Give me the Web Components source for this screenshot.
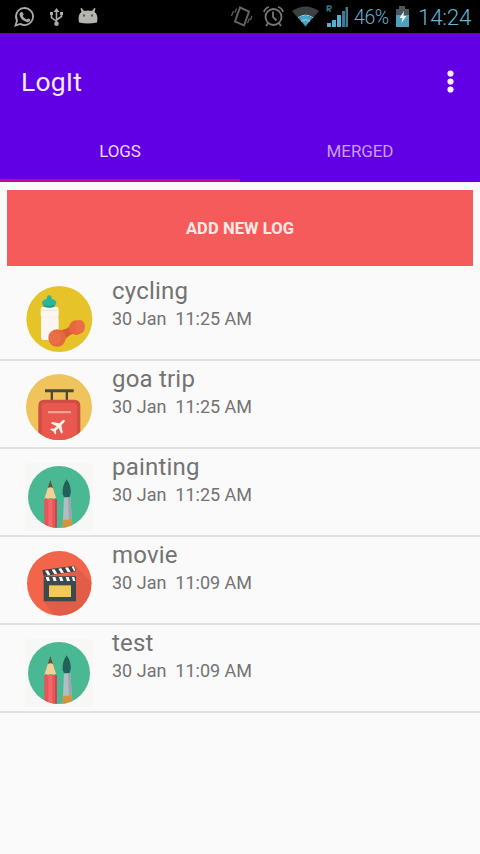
<!DOCTYPE html>
<html lang="en">
<head>
<meta charset="utf-8">
<title>LogIt</title>
<style>
body{margin:0;width:480px;height:854px;overflow:hidden;background:#fafafa;font-family:Roboto,"Liberation Sans",sans-serif}
</style>
</head>
<body>
<log-app></log-app>
<script>
const define = (name, html) => customElements.define(name, class extends HTMLElement {
  connectedCallback() {
    if (this.shadowRoot) return;
    const t = document.createElement('template');
    t.innerHTML = typeof html === 'function' ? html(this) : html;
    this.attachShadow({mode: 'open'}).append(t.content.cloneNode(true));
  }
});

const supplies = `
  <rect x="30" y="39" width="204" height="204" fill="#f7f7f6"/>
  <circle cx="132" cy="141" r="93" fill="#4bb894"/>
  <g clip-path="url(#c)">
    <path d="M88 146h36v100H88z" fill="#e9535a"/><path d="M100 146h12v100h-12z" fill="#f4686b"/><path d="M120 146h6v100h-6z" fill="#c74950"/>
    <path d="M106 90l18 57q-5-6-9 0q-8-6-16 0q-6-6-11 0z" fill="#f2d294"/>
    <path d="M106 89l8 25q-8-5-16 0z" fill="#4c5b4a"/>
    <path d="M155 88q15 22 12 43l-4 13h-15l-5-13q-2-23 12-43z" fill="#23605a"/>
    <path d="M147 142h19l5 68h-27z" fill="#b1bec1"/><path d="M159 142h7l5 68h-9z" fill="#98a7ab"/>
    <path d="M143 209h28l2 36h-31z" fill="#d39640"/>
  </g>`;
const art = {
  cycling: [3, 133, 132, 99, `<circle cx="133" cy="132" r="99" fill="#e6c329"/>
    <path d="M77 104q0-9 9-9h36q9 0 9 9v19q-3 5 0 10v52q0 10-9 10H87q-9 0-9-10v-52q3-5-1-10z" fill="#fbf6f0"/>
    <path d="M78 104h52v4H78zM79 125h51v2H79z" fill="#f0e8d4"/>
    <path d="M95 72q0-11 8-11t7 11q13 2 14 11-3 14-22 14-19-1-21-14 3-9 14-11z" fill="#29b69a"/><path d="M84 89q18 8 36 0l-3 7q-14 5-29 0z" fill="#179b89"/>
    <path d="M137 166q20-2 32-18l17 25q-23 3-35 20z" fill="#d95b36"/>
    <ellipse cx="184" cy="158" rx="22" ry="22" fill="#e7683f"/><ellipse cx="195" cy="155" rx="15" ry="20" fill="#ea6d45"/>
    <circle cx="126" cy="189" r="26" fill="#e7683f"/><circle cx="120" cy="190" r="18" fill="#ea6f47"/>`],
  trip: [3, 132, 132, 99, `<circle cx="132" cy="132" r="99" fill="#efc45c"/>
    <g clip-path="url(#c)"><path d="M90 79h86v9H90zM107 86h7v28h-7zM152 86h7v28h-7z" fill="#4b4936"/>
    <path d="M70 240V128q0-18 18-18h90q18 0 18 18v112z" fill="#cf4d43"/>
    <path d="M80 240V130q0-10 10-10h86q10 0 10 10v110z" fill="#e9584e"/>
    <path d="M99 144h69v7H99z" fill="#f9a492"/></g>
    <path transform="translate(132 188) rotate(45)" d="M0-24q4 0 4 7v11l18 12v6L4 6v11l7 6v4L0 24l-11 3v-4l7-6V6l-18 6V6l18-12v-11q0-7 4-7z" fill="#fff4ea"/>`],
  supplies: [2, 132, 141, 93, supplies],
  movie: [2, 133, 136, 97, `<circle cx="133" cy="136" r="97" fill="#f2654b"/>
    <path d="M181 85l48 47q1 59-53 91-30 17-62 6l-28-39z" fill="#e15d47" clip-path="url(#c)"/>
    <path d="M82 96l97-13 4 17-97 14z" fill="#3d4246"/>
    <path d="M86 115h97v75H86z" fill="#3d4a4d"/>
    <path d="M90 98l9-1 7 13-8 1zM110 95l9-1 8 13-9 1zM130 92l9-1 8 13-9 1zM150 89l9-1 8 13-9 1zM170 86l7-1 4 14-4 0zM92 117h9l4 12h-9zM112 117h9l4 12h-9zM132 117h9l4 12h-9zM152 117h9l4 12h-9zM171 117h7l3 12h-7z" fill="#fff"/>
    <path d="M102 142h66v35h-66z" fill="#f3ca5a"/>`]
};

define('log-icon', el => {
  const [dy, cx, cy, r, body] = art[el.getAttribute('kind')];
  return `<style>:host{display:block;width:90px;height:88px}svg{display:block}</style>
  <svg width="90" height="88" viewBox="0 ${-dy * 3} 270 264"><clipPath id="c"><circle cx="${cx}" cy="${cy}" r="${r}"/></clipPath>${body}</svg>`;
});

define('log-row', el => `<style>
  :host{display:flex;box-sizing:border-box;height:88px;padding-left:15px;gap:7px;border-bottom:2px solid #e1e1e1;color:#737373}
  log-icon{flex:none;margin-top:-1px}
  .name{font-size:24px;line-height:28px;margin-top:4px;letter-spacing:.2px}
  .date{font-size:18px;line-height:22px;margin-top:3px;white-space:pre}
  </style><log-icon kind="${el.getAttribute('kind')}"></log-icon>
  <div><div class="name"><slot></slot></div><div class="date"><slot name="date"></slot></div></div>`);

define('status-bar', `<style>
  :host{display:flex;height:33px;background:#000;align-items:center;color:#66b5d3}
  svg{flex:none;display:block}.pct{font-size:19.500px;width:40px;line-height:33px;letter-spacing:-.4px;padding-top:2px}.time{font-size:22.500px;line-height:33px;margin-left:4px;letter-spacing:-.3px;padding-top:2px}
  .pct,.time{font-weight:300}
  </style>
  <svg width="354" height="33" viewBox="0 0 354 33" fill="none" stroke="#aaa" stroke-width="1.8">
    <path d="M15.500 25.500l1.500-5a8.500 8.500 0 1 1 3.300 3.400z"/><path d="M20.500 12.500q1-1.500 2.200-.1l1 2-1 1.500q1.300 2.500 4 3.700l1.400-1.200 2.400 1.200q-.5 3-3.700 2.500-6.500-2-7.500-8z" fill="#aaa" stroke="none"/>
    <path d="M56.500 11v13M51.500 14.500v3l5 4M61.500 13.500v3l-5 3.500" stroke-width="1.600"/><path d="M53.500 12l3-4 3 4zM50 12h3v3h-3zM60 12h3v3h-3z" fill="#aaa" stroke="none"/><circle cx="56.500" cy="23.700" r="2.300" fill="#aaa" stroke="none"/>
    <path d="M79 22.500q-1.500-8 2.500-10.500l-1-3.500 1.200-.5 2.300 3q4-1 8 0l2.300-3 1.200.5-1 3.500q4 2.500 2.500 10.500-9.500 2-18 0z" fill="#b5b5b0" stroke="none"/><path d="M83 15.500h2M91 15.500h2" stroke="#555"/>
    <g stroke="#626262"><path d="M240 7.500l9 4-5 14-9-4z" stroke-width="2"/><path d="M236.500 8.500l-1.500 4M233.500 11l-2 5M247.500 23l2-4.500M250.500 20l1.500-4" stroke-width="1.200"/></g>
    <g stroke="#777"><circle cx="273.500" cy="17" r="8"/><path d="M273 11.500V17l3.500 3.500M264 12q1-4 5-5M278 7q4 1 5 5M268 23l-2 3M279 23l2 3"/></g>
    <path d="M292 11q13.500-9 27 0l-13.500 16z" fill="#3b4143" stroke="none"/><path d="M299 18q6.500-4.500 13 0l-6.500 8z" fill="#43a8cc" stroke="none"/><path d="M298 17.700q7.500-5.200 15 0M301 21.200q4.500-3 9 0" stroke="#9fd0e0" stroke-width="1"/>
    <path d="M327 27v-4h4v4zM332 27v-7h4v7zM337 27v-12h4v12z" fill="#51b2d6" stroke="none"/><path d="M342 27V11h3v16zM345.500 27V7h2.500v20z" fill="#3f7890" stroke="none"/>
    <path d="M327.300 11.500V6h2q2 0 2 1.500t-2 1.500h-1.500l3 2.500" stroke="#397e93" stroke-width="1.300"/>
  </svg>
  <span class="pct">46%</span>
  <svg width="20" height="33" viewBox="0 0 20 33"><path d="M2 9h3V6h6v3h4v18H2z" fill="#4c565a"/><path d="M2 15h13v12H2z" fill="#50a0bc"/><path d="M10 11l-4.500 7h3L7.500 23l5-7H9.500z" fill="#e6f4f8"/></svg>
  <span class="time">14:24</span>`);

define('app-bar', `<style>
  :host{display:block;height:149px;background:#6100e4;color:#f8e9ff}
  header{display:flex;justify-content:space-between;align-items:center;height:97px;padding:0 23px 0 21px}
  h1{font-weight:400;font-size:26.500px;line-height:32px;margin:0;letter-spacing:.2px;padding-top:1px}
  nav{display:grid;grid-template-columns:1fr 1fr;height:52px}
  </style><header><h1>LogIt</h1><svg width="14" height="28" viewBox="0 0 14 28" fill="#fbefff"><circle cx="7.500" cy="5.500" r="3.100"/><circle cx="7.500" cy="13.500" r="3.100"/><circle cx="7.500" cy="21.500" r="3.100"/></svg></header>
  <nav><app-tab active>LOGS</app-tab><app-tab>MERGED</app-tab></nav>`);

define('app-tab', `<style>
  :host{display:flex;justify-content:center;box-sizing:border-box;padding-top:11px;font-size:17px;line-height:20px;color:#c99df5;letter-spacing:-.1px}
  :host([active]){color:#f0d9ff;border-bottom:3px solid #ba0a98}
  </style><slot></slot>`);

define('add-button', `<style>:host{display:block;padding:8px 7px 7px}
  button{display:block;width:466px;height:76px;border:0;padding:0;background:#f65b5b;color:#ffe9e5;font:700 16.500px Roboto,"Liberation Sans",sans-serif;letter-spacing:.1px}
  </style><button><slot></slot></button>`);

define('log-app', `<style>:host{display:block}main{display:block}</style>
  <status-bar></status-bar><app-bar></app-bar>
  <main><add-button>ADD NEW LOG</add-button>
  <log-row kind="cycling">cycling<span slot="date">30 Jan  11:25 AM</span></log-row>
  <log-row kind="trip">goa trip<span slot="date">30 Jan  11:25 AM</span></log-row>
  <log-row kind="supplies">painting<span slot="date">30 Jan  11:25 AM</span></log-row>
  <log-row kind="movie">movie<span slot="date">30 Jan  11:09 AM</span></log-row>
  <log-row kind="supplies">test<span slot="date">30 Jan  11:09 AM</span></log-row></main>`);
</script>
</body>
</html>
